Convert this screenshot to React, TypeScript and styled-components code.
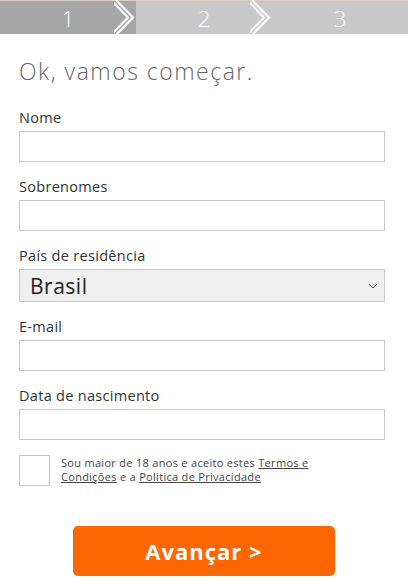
import React from "react";
import styled, { createGlobalStyle } from "styled-components";

const Global = createGlobalStyle`
  html, body { margin: 0; padding: 0; background: #fff; }
  body { font-family: "Open Sans", "Lato", sans-serif; }
  * { box-sizing: border-box; }
`;

const Page = styled.div`
  width: 408px;
  height: 582px;
  overflow: hidden;
  background: #fff;
`;

const Steps = styled.div`
  display: flex;
  height: 34px;
  border-top: 1px solid #d8cfc3;
`;

const Step = styled.div<{ $active?: boolean }>`
  position: relative;
  flex: 1;
  display: flex;
  align-items: center;
  justify-content: center;
  background: ${(p) => (p.$active ? "#a6a6a6" : "#c8c8c8")};
  color: #fff;
  font-size: 22px;
  font-weight: 300;
`;

const ChevronWrap = styled.svg`
  position: absolute;
  right: -2px;
  top: -1px;
  z-index: 2;
`;

const Chevron = () => (
  <ChevronWrap width="24" height="35" viewBox="0 0 24 35">
    <path d="M2 0 L19 17.5 L2 35" fill="none" stroke="#fff" strokeWidth="2.2" />
    <path d="M-3 0 L14 17.5 L-3 35" fill="none" stroke="#fff" strokeWidth="2.2" opacity="0.9" />
  </ChevronWrap>
);

const Form = styled.div`
  padding: 0 23px 0 19px;
  display: flex;
  flex-direction: column;
`;

const Title = styled.h1`
  margin: 23px 0 24px;
  font-size: 23px;
  font-weight: 300;
  color: #666;
  letter-spacing: 1.5px;
  line-height: 28px;
`;

const Field = styled.div`
  display: flex;
  flex-direction: column;
  margin-bottom: 16px;
`;

const Label = styled.label`
  font-size: 14.5px;
  font-weight: 400;
  color: #333;
  line-height: 18px;
  margin-bottom: 4px;
  letter-spacing: 0.3px;
`;

const Input = styled.div`
  height: 31px;
  border: 1px solid #c9c9c9;
  background: #fff;
`;

const Select = styled.div`
  height: 33px;
  border: 1px solid #c9c9c9;
  background: #efefef;
  display: flex;
  align-items: center;
  justify-content: space-between;
  padding: 0 6px 0 10px;
  font-size: 21px;
  color: #222;
  letter-spacing: 0.5px;
`;

const Terms = styled.div`
  display: flex;
  align-items: flex-start;
  gap: 11px;
  margin-top: -1px;
`;

const Box = styled.div`
  width: 31px;
  height: 31px;
  border: 1px solid #c4c4c4;
  flex-shrink: 0;
`;

const TermsText = styled.div`
  font-size: 11px;
  line-height: 14px;
  color: #444;
  padding-top: 1px;
  letter-spacing: 0.3px;
  width: 280px;
`;

const Link = styled.span`
  text-decoration: underline;
`;

const ButtonRow = styled.div`
  display: flex;
  justify-content: center;
  margin-top: 40px;
  padding-left: 4px;
`;

const Button = styled.div`
  width: 262px;
  height: 50px;
  background: #fe6601;
  border-radius: 5px;
  color: #fff;
  font-size: 22px;
  font-weight: 700;
  display: flex;
  align-items: center;
  justify-content: center;
  letter-spacing: 1px;
`;

export default function App() {
  return (
    <Page>
      <Global />
      <Steps>
        <Step $active>1<Chevron /></Step>
        <Step>2<Chevron /></Step>
        <Step>3</Step>
      </Steps>
      <Form>
        <Title>Ok, vamos começar.</Title>
        <Field>
          <Label>Nome</Label>
          <Input />
        </Field>
        <Field>
          <Label>Sobrenomes</Label>
          <Input />
        </Field>
        <Field>
          <Label>País de residência</Label>
          <Select>
            Brasil
            <svg width="10" height="6" viewBox="0 0 10 6">
              <path d="M1 1 L5 5 L9 1" fill="none" stroke="#555" strokeWidth="1" />
            </svg>
          </Select>
        </Field>
        <Field>
          <Label>E-mail</Label>
          <Input />
        </Field>
        <Field>
          <Label>Data de nascimento</Label>
          <Input />
        </Field>
        <Terms>
          <Box />
          <TermsText>
            Sou maior de 18 anos e aceito estes <Link>Termos e</Link>
            <br />
            <Link>Condições</Link> e a <Link>Politica de Privacidade</Link>
          </TermsText>
        </Terms>
        <ButtonRow>
          <Button>Avançar &gt;</Button>
        </ButtonRow>
      </Form>
    </Page>
  );
}
